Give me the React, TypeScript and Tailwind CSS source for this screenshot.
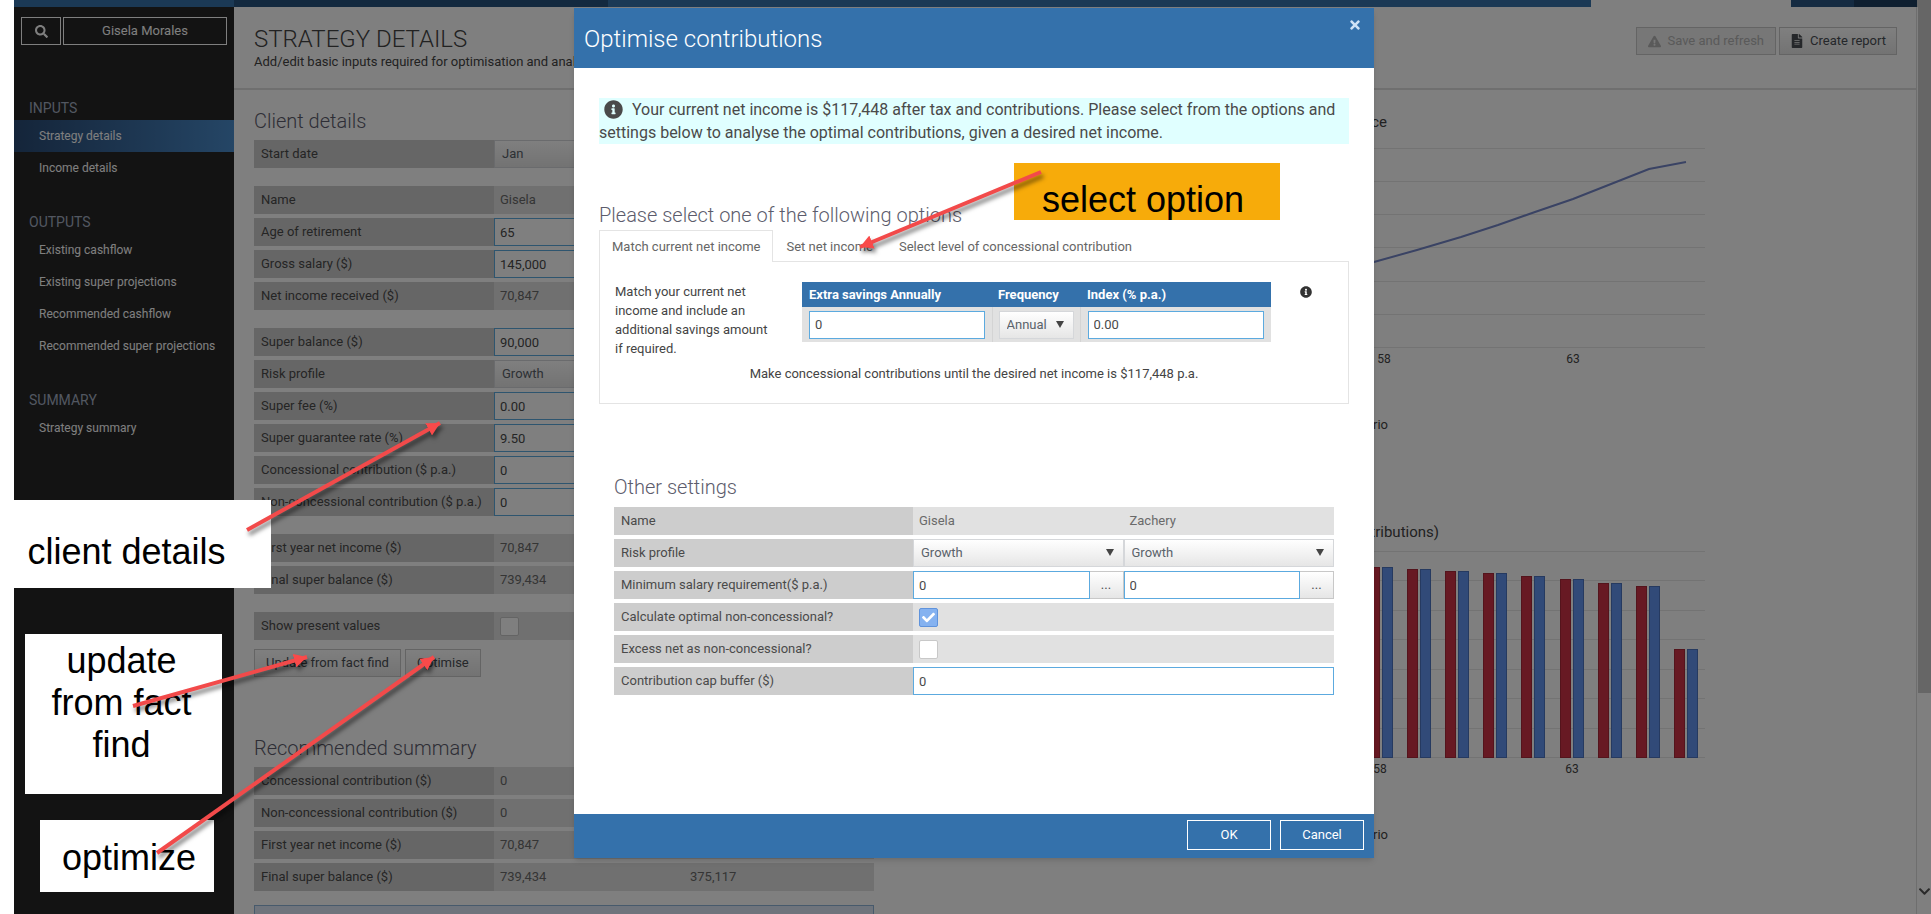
import { useState } from "react";
import type { ReactNode } from "react";
import {
  FaCheck,
  FaChevronDown,
  FaExclamationTriangle,
  FaFileAlt,
  FaInfoCircle,
  FaSearch,
  FaTimes,
} from "react-icons/fa";

const NAV = [
  {
    title: "INPUTS",
    items: ["Strategy details", "Income details"],
  },
  {
    title: "OUTPUTS",
    items: [
      "Existing cashflow",
      "Existing super projections",
      "Recommended cashflow",
      "Recommended super projections",
    ],
  },
  { title: "SUMMARY", items: ["Strategy summary"] },
];

type Field = {
  label: string;
  value: string;
  second?: string;
  kind?: "input" | "select" | "checkbox";
};

const CLIENT_GROUPS: Field[][] = [
  [{ label: "Start date", value: "Jan", kind: "select" }],
  [
    { label: "Name", value: "Gisela" },
    { label: "Age of retirement", value: "65", kind: "input" },
    { label: "Gross salary ($)", value: "145,000", kind: "input" },
    { label: "Net income received ($)", value: "70,847" },
  ],
  [
    { label: "Super balance ($)", value: "90,000", kind: "input" },
    { label: "Risk profile", value: "Growth", kind: "select" },
    { label: "Super fee (%)", value: "0.00", kind: "input" },
    { label: "Super guarantee rate (%)", value: "9.50", kind: "input" },
    { label: "Concessional contribution ($ p.a.)", value: "0", kind: "input" },
    { label: "Non-concessional contribution ($ p.a.)", value: "0", kind: "input" },
  ],
  [
    { label: "First year net income ($)", value: "70,847" },
    { label: "Final super balance ($)", value: "739,434" },
  ],
  [{ label: "Show present values", value: "", kind: "checkbox" }],
];

const SUMMARY: Field[] = [
  { label: "Concessional contribution ($)", value: "0" },
  { label: "Non-concessional contribution ($)", value: "0" },
  { label: "First year net income ($)", value: "70,847" },
  { label: "Final super balance ($)", value: "739,434", second: "375,117" },
];

// left edge of each pair and the top of its bars
const BARS = [
  [464, 67],
  [502, 69],
  [540, 71],
  [578, 73],
  [616, 76],
  [655, 79],
  [693, 83],
  [731, 86],
  [769, 149],
];

const inputClass =
  "block h-7 w-full border border-[#5caadf] bg-white px-[5px] text-[13px] text-[#4a4a4a] outline-none";
const selectClass =
  "block h-7 w-full appearance-none border border-[#d5d7da] bg-linear-to-b from-white to-[#e6e6e6] px-[7px] text-[13px] text-[#5a626a] outline-none";
const grayButton =
  "flex h-7 items-center justify-center border border-[#c8c8c8] bg-linear-to-b from-white to-[#e6e6e6] text-[13px] text-[#4a4f55]";

function Tick({ label, initial = false }: { label: string; initial?: boolean }) {
  const [on, setOn] = useState(initial);
  return (
    <span className="relative ml-1.5 block size-[19px]">
      <input
        type="checkbox"
        aria-label={label}
        checked={on}
        onChange={(e) => setOn(e.target.checked)}
        className="block size-[19px] appearance-none rounded-[2px] border border-[#c8c8c8] bg-white checked:border-[#5f93dc] checked:bg-[#85b2f0]"
      />
      {on && (
        <FaCheck size={13} className="pointer-events-none absolute top-[3px] left-[3px] text-white" />
      )}
    </span>
  );
}

function Select({ label, options }: { label: string; options: string[] }) {
  return (
    <span className="relative block">
      <select aria-label={label} className={selectClass}>
        {options.map((o) => (
          <option key={o}>{o}</option>
        ))}
      </select>
      <svg
        viewBox="0 0 8 7"
        className="pointer-events-none absolute top-[10px] right-[10px] h-[7px] w-2 fill-[#444]"
      >
        <path d="M0 0h8L4 7z" />
      </svg>
    </span>
  );
}

function FieldTable({ rows }: { rows: Field[] }) {
  return (
    <table className="w-full table-fixed border-separate border-spacing-x-0 border-spacing-y-1 text-[13px]">
      <tbody>
        {rows.map((row) => (
          <tr key={row.label} className="h-7">
            <th className="w-60 bg-[#cdcdcd] px-[7px] text-left font-normal text-[#4a4a4a]">
              {row.label}
            </th>
            <td className="bg-[#e1e1e1] p-0 text-[#6a6a6a]">
              {row.kind === "input" && (
                <input aria-label={row.label} defaultValue={row.value} className={inputClass} />
              )}
              {row.kind === "select" && <Select label={row.label} options={[row.value]} />}
              {row.kind === "checkbox" && <Tick label={row.label} />}
              {!row.kind && <span className="px-1.5">{row.value}</span>}
            </td>
            <td className="bg-[#e1e1e1] px-1.5 text-[#6a6a6a]">{row.second}</td>
          </tr>
        ))}
      </tbody>
    </table>
  );
}

function Sidebar() {
  return (
    <aside className="w-[220px] shrink-0 bg-[#262626] text-[12px] text-white">
      <div className="flex gap-[2px] px-[7px] pt-[10px]">
        <button
          aria-label="Search"
          className="flex h-7 w-10 items-center justify-center border border-white"
        >
          <FaSearch size={13} />
        </button>
        <button className="h-7 flex-1 border border-white text-[13px]">Gisela Morales</button>
      </div>
      <nav className="flex flex-col gap-[26px] pt-[51px]">
        {NAV.map((group) => (
          <div key={group.title}>
            <h2 className="h-6 pl-[15px] text-[14px] leading-6 text-[#a4afc2]">{group.title}</h2>
            <ul>
              {group.items.map((item) => (
                <li key={item}>
                  <a
                    href="#"
                    className={
                      item === "Strategy details"
                        ? "block h-8 bg-linear-to-r from-[#294a74] to-[#4a8ccc] pl-[25px] leading-8"
                        : "block h-8 pl-[25px] leading-8"
                    }
                  >
                    {item}
                  </a>
                </li>
              ))}
            </ul>
          </div>
        ))}
      </nav>
    </aside>
  );
}

function BalanceChart() {
  return (
    <svg width="800" height="410" className="block" fill="#444">
      <text x="482" y="37" textAnchor="end" fontSize="15">
        Balance
      </text>
      {[58, 91, 124, 157, 191, 224, 257].map((y) => (
        <path key={y} d={`M70 ${y}.5H800`} stroke="#e6e6e6" />
      ))}
      <path
        d="M394 191L469 172L512 160L556 147L593 135L630 122L668 109L706 94L744 79L781 72"
        fill="none"
        stroke="#7486c8"
        strokeWidth="2"
      />
      <text x="479" y="273" textAnchor="middle" fontSize="12">
        58
      </text>
      <text x="668" y="273" textAnchor="middle" fontSize="12">
        63
      </text>
      <text x="483" y="339" textAnchor="end" fontSize="13">
        Scenario
      </text>
    </svg>
  );
}

function IncomeChart() {
  return (
    <svg width="800" height="410" className="block" fill="#444">
      <text x="534" y="37" textAnchor="end" fontSize="15">
        Net income (after contributions)
      </text>
      {[51, 80, 110, 139, 169, 198, 228, 257].map((y) => (
        <path key={y} d={`M70 ${y}.5H800`} stroke="#e6e6e6" />
      ))}
      {BARS.map(([x, top]) => (
        <g key={x}>
          <rect x={x + 0.5} y={top + 0.5} width="10" height={257 - top} fill="#ce3246" stroke="#a82838" />
          <rect x={x + 13.5} y={top + 0.5} width="10" height={257 - top} fill="#6294f0" stroke="#4c74c0" />
        </g>
      ))}
      <text x="475" y="273" textAnchor="middle" fontSize="12">
        58
      </text>
      <text x="667" y="273" textAnchor="middle" fontSize="12">
        63
      </text>
      <text x="483" y="339" textAnchor="end" fontSize="13">
        Scenario
      </text>
    </svg>
  );
}

function StrategyPage() {
  return (
    <main className="min-w-0 flex-1 bg-white">
      <header className="flex h-[83px] items-start justify-between border-b-2 border-[#dedede] pr-[19px] pl-5">
        <div className="pt-4 text-[#444]">
          <h1 className="text-[24px] leading-8 font-light">STRATEGY DETAILS</h1>
          <p className="text-[13px] leading-[14px]">
            Add/edit basic inputs required for optimisation and analysis
          </p>
        </div>
        <div className="flex gap-[3px] pt-5">
          <button
            disabled
            className="flex h-7 items-center gap-1.5 border border-[#c8c8c8] bg-[#eeeeee] px-[11px] text-[13px] text-[#b4b4b4]"
          >
            <FaExclamationTriangle size={13} />
            Save and refresh
          </button>
          <button className={`${grayButton} gap-1.5 px-[10px]`}>
            <FaFileAlt size={14} />
            Create report
          </button>
        </div>
      </header>
      <div className="flex">
        <section className="w-[660px] shrink-0 px-5 pt-[19px]">
          <h2 className="mb-[3px] h-6 text-[20px] leading-6 font-light text-[#5c5c6c]">
            Client details
          </h2>
          <div className="flex flex-col gap-[10px]">
            {CLIENT_GROUPS.map((rows) => (
              <FieldTable key={rows[0].label} rows={rows} />
            ))}
          </div>
          <div className="flex gap-1 pt-[5px]">
            <button className={`${grayButton} px-[11px]`}>Update from fact find</button>
            <button className={`${grayButton} px-[11px]`}>Optimise</button>
          </div>
          <h2 className="mt-[59px] mb-[3px] h-6 text-[20px] leading-6 font-light text-[#5c5c6c]">
            Recommended summary
          </h2>
          <FieldTable rows={SUMMARY} />
          <div className="mt-[10px] h-10 border border-[#8fb4d8] bg-[#dfe8f8]" />
        </section>
        <section className="pl-[11px]">
          <BalanceChart />
          <IncomeChart />
        </section>
      </div>
    </main>
  );
}

function SettingRow({ label, children }: { label: string; children: ReactNode }) {
  return (
    <tr className="h-7">
      <th className="w-[299px] bg-[#cdcdcd] px-[7px] text-left font-normal text-[#4a4a4a]">
        {label}
      </th>
      {children}
    </tr>
  );
}

function OtherSettings() {
  return (
    <section className="mt-[69px] px-[15px]">
      <h3 className="h-[30px] text-[20px] leading-7 font-light text-[#5c5c6c]">Other settings</h3>
      <table className="w-full table-fixed border-separate border-spacing-x-0 border-spacing-y-1 text-[13px]">
        <tbody>
          <SettingRow label="Name">
            <td className="bg-[#e1e1e1] px-1.5 text-[#6a6a6a]">Gisela</td>
            <td className="bg-[#e1e1e1] px-1.5 text-[#6a6a6a]">Zachery</td>
          </SettingRow>
          <SettingRow label="Risk profile">
            {["Gisela", "Zachery"].map((who) => (
              <td key={who} className="p-0">
                <Select label={`Risk profile, ${who}`} options={["Growth", "Balanced"]} />
              </td>
            ))}
          </SettingRow>
          <SettingRow label="Minimum salary requirement($ p.a.)">
            {["Gisela", "Zachery"].map((who) => (
              <td key={who} className="p-0">
                <div className="flex">
                  <input
                    aria-label={`Minimum salary requirement, ${who}`}
                    defaultValue="0"
                    className={inputClass}
                  />
                  <button className={`${grayButton} w-[34px] shrink-0 border-l-0`}>...</button>
                </div>
              </td>
            ))}
          </SettingRow>
          <SettingRow label="Calculate optimal non-concessional?">
            <td colSpan={2} className="bg-[#e1e1e1] p-0">
              <Tick label="Calculate optimal non-concessional?" initial />
            </td>
          </SettingRow>
          <SettingRow label="Excess net as non-concessional?">
            <td colSpan={2} className="bg-[#e1e1e1] p-0">
              <Tick label="Excess net as non-concessional?" />
            </td>
          </SettingRow>
          <SettingRow label="Contribution cap buffer ($)">
            <td colSpan={2} className="p-0">
              <input
                aria-label="Contribution cap buffer ($)"
                defaultValue="0"
                className={inputClass}
              />
            </td>
          </SettingRow>
        </tbody>
      </table>
    </section>
  );
}

function OptimiseDialog() {
  return (
    <div
      role="dialog"
      aria-label="Optimise contributions"
      className="flex h-[850px] w-[800px] flex-col bg-white shadow-md"
    >
      <header className="flex h-[60px] shrink-0 items-start justify-between bg-[#3471ab] pr-3 pl-[10px] text-white">
        <h2 className="text-[24px] leading-[62px] font-light">Optimise contributions</h2>
        <button aria-label="Close" className="mt-2.5 text-[#cfe2f5]">
          <FaTimes size={14} />
        </button>
      </header>

      <div className="flex-1 px-[25px] pt-[30px]">
        <p className="bg-[#e0ffff] text-[16px] leading-[23px] text-[#4a4a4a]">
          <FaInfoCircle size={19} className="mr-[9px] ml-[5px] inline align-[-4px]" />
          Your current net income is $117,448 after tax and contributions. Please select from the
          options and settings below to analyse the optimal contributions, given a desired net
          income.
        </p>

        <h3 className="mt-[58px] h-7 text-[20px] leading-[26px] font-light text-[#5c5c6c]">
          Please select one of the following options
        </h3>
        <div role="tablist" className="flex h-[31px] text-[13px] text-[#666]">
          <button
            role="tab"
            aria-selected="true"
            className="z-10 h-8 border border-b-0 border-[#e4e4e4] bg-white px-3 pt-px"
          >
            Match current net income
          </button>
          <button role="tab" className="px-[13px] pt-0.5">
            Set net income
          </button>
          <button role="tab" className="px-[13px] pt-0.5">
            Select level of concessional contribution
          </button>
        </div>
        <div role="tabpanel" className="border border-[#e4e4e4] pt-5 pb-[20px] text-[13px] text-[#444]">
          <div className="flex items-start pl-[15px]">
            <p className="w-[187px] shrink-0 pr-8 leading-[19px]">
              Match your current net income and include an additional savings amount if required.
            </p>
            <table className="w-[469px] table-fixed border-collapse bg-[#e1e1e1]">
              <thead className="bg-[#3471ab] text-left text-white">
                <tr className="h-[25px]">
                  <th className="w-[190px] px-[7px] font-bold">Extra savings Annually</th>
                  <th className="w-[88px] px-1.5 font-bold">Frequency</th>
                  <th className="px-[7px] font-bold">Index (% p.a.)</th>
                </tr>
              </thead>
              <tbody>
                <tr className="h-[35px]">
                  <td className="border-r border-[#d4d4d4] px-[7px]">
                    <input aria-label="Extra savings" defaultValue="0" className={inputClass} />
                  </td>
                  <td className="border-r border-[#d4d4d4] px-1.5">
                    <Select label="Frequency" options={["Annual", "Monthly"]} />
                  </td>
                  <td className="px-[7px]">
                    <input aria-label="Index (% p.a.)" defaultValue="0.00" className={inputClass} />
                  </td>
                </tr>
              </tbody>
            </table>
            <FaInfoCircle size={12} className="mt-1 ml-[29px] text-[#333]" />
          </div>
          <p className="mt-[6px] text-center leading-[19px]">
            Make concessional contributions until the desired net income is $117,448 p.a.
          </p>
        </div>

        <OtherSettings />
      </div>

      <footer className="flex h-11 shrink-0 items-start justify-end gap-[9px] bg-[#3471ab] pt-1.5 pr-[10px] text-[13px] text-white">
        <button className="h-[30px] w-21 border border-white">OK</button>
        <button className="h-[30px] w-21 border border-white">Cancel</button>
      </footer>
    </div>
  );
}

const ARROWS = [
  { from: [247, 530], to: [440, 423] },
  { from: [133, 706], to: [307, 657] },
  { from: [157, 853], to: [434, 657] },
  { from: [1041, 172], to: [860, 247] },
];

// Callouts sit on a free canvas above the whole screen
function Annotations() {
  const note = "absolute text-center text-[36px] text-black";
  return (
    <div className="pointer-events-none absolute inset-0 font-['Liberation_Sans',Arial,sans-serif]">
      <p className={`${note} top-[500px] left-[14px] h-[88px] w-[257px] bg-white pt-[31px] pr-8 leading-[42px]`}>
        client details
      </p>
      <p className={`${note} top-[634px] left-[25px] h-[160px] w-[197px] bg-white pt-1.5 pr-5 pl-4 leading-[42px]`}>
        update from fact find
      </p>
      <p className={`${note} top-[820px] left-[40px] h-[72px] w-[174px] bg-white pt-[17px] pl-1 leading-[42px]`}>
        optimize
      </p>
      <p className={`${note} top-[163px] left-[1014px] h-[57px] w-[266px] bg-[#f7ab0a] pt-4 pr-2 leading-[42px]`}>
        select option
      </p>
      <svg className="absolute inset-0 h-full w-full drop-shadow-[2px_4px_2px_rgba(0,0,0,0.5)]">
        <defs>
          <marker
            id="head"
            markerUnits="userSpaceOnUse"
            markerWidth="14"
            markerHeight="14"
            refX="13"
            refY="7"
            orient="auto"
          >
            <path d="M0 0L13 7L0 14z" fill="#f94a4a" />
          </marker>
        </defs>
        {ARROWS.map(({ from, to }) => (
          <path
            key={from[0]}
            d={`M${from[0]} ${from[1]}L${to[0]} ${to[1]}`}
            stroke="#f24a4a"
            strokeWidth="4"
            markerEnd="url(#head)"
          />
        ))}
      </svg>
    </div>
  );
}

export default function App() {
  return (
    <div className="relative h-screen overflow-hidden bg-white pl-[14px] font-['Roboto',sans-serif]">
      <div className="flex h-full flex-col">
        <div className="flex h-[7px] shrink-0">
          <div className="w-[220px] bg-[#3672aa]" />
          <div className="w-[374px] bg-[#26527e]" />
          <div className="flex-1 bg-[#3672aa]" />
          <div className="w-[200px] bg-white" />
          <div className="w-[63px] bg-[#2b5684]" />
          <div className="w-[63px] bg-[#1e3f60]" />
          <div className="w-[14px] bg-[#cccccc]" />
        </div>
        <div className="flex min-h-0 flex-1">
          <Sidebar />
          <StrategyPage />
          <div className="flex w-[15px] shrink-0 flex-col justify-between border-l border-[#dcdcdc] bg-white">
            <div className="ml-px h-[686px] bg-[#cccccc]" />
            <FaChevronDown size={13} className="mb-4 ml-px text-[#555]" />
          </div>
        </div>
      </div>

      <div className="absolute inset-y-0 right-0 left-[14px] flex items-start justify-center bg-black/50 pt-2 pl-[3px]">
        <OptimiseDialog />
      </div>

      <Annotations />
    </div>
  );
}
